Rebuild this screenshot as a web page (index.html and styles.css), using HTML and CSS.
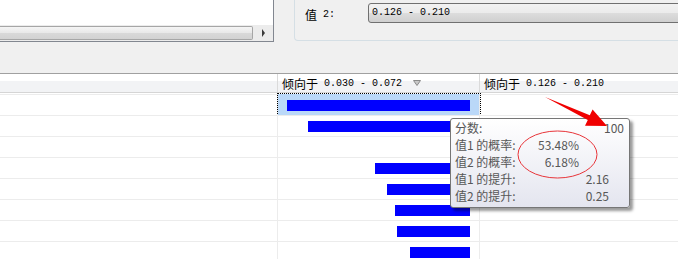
FILE: index.html
```html
<!DOCTYPE html>
<html lang="zh-CN">
<head>
    <meta charset="UTF-8">
    <title>依赖网络 - 属性区分</title>
    <link rel="stylesheet" href="styles.css">
</head>
<body>
    <div class="top">
        <div class="listbox">
            <div class="list-area"></div>
            <div class="hscroll">
                <div class="thumb"></div>
                <div class="arrow-btn"><span class="arrow-right"></span></div>
            </div>
        </div>
        <div class="group">
            <span class="field-label"><span class="cjk">值</span><span class="num">2:</span></span>
            <div class="combo">0.126 - 0.210</div>
        </div>
    </div>

    <div class="grid">
        <div class="grid-head">
            <div class="hcell"></div>
            <div class="hcell">
                <span class="cjk">倾向于</span><span class="num">0.030 - 0.072</span>
                <svg class="sort-icon" width="8" height="6" viewBox="0 0 8 6">
                    <path d="M0.5 0.5 H7.5 L4 5.5 Z" fill="#c8c8c8" stroke="#8a8a8a" stroke-width="1"/>
                </svg>
            </div>
            <div class="hcell"><span class="cjk">倾向于</span><span class="num">0.126 - 0.210</span></div>
        </div>
        <div class="grid-body">
            <!-- 每行: 左列空, 中列倾向值1, 右列倾向值2 -->
            <div class="row">
                <div class="cell"></div>
                <div class="cell selected"><div class="bar" style="width: 183px;"></div></div>
                <div class="cell"></div>
            </div>
            <div class="row">
                <div class="cell"></div>
                <div class="cell"><div class="bar" style="width: 162px;"></div></div>
                <div class="cell"></div>
            </div>
            <div class="row">
                <div class="cell"></div>
                <div class="cell"></div>
                <div class="cell"><div class="bar" style="width: 30px;"></div></div>
            </div>
            <div class="row">
                <div class="cell"></div>
                <div class="cell"><div class="bar" style="width: 95px;"></div></div>
                <div class="cell"></div>
            </div>
            <div class="row">
                <div class="cell"></div>
                <div class="cell"><div class="bar" style="width: 83px;"></div></div>
                <div class="cell"></div>
            </div>
            <div class="row">
                <div class="cell"></div>
                <div class="cell"><div class="bar" style="width: 75px;"></div></div>
                <div class="cell"></div>
            </div>
            <div class="row">
                <div class="cell"></div>
                <div class="cell"><div class="bar" style="width: 73px;"></div></div>
                <div class="cell"></div>
            </div>
            <div class="row">
                <div class="cell"></div>
                <div class="cell"><div class="bar" style="width: 60px;"></div></div>
                <div class="cell"></div>
            </div>
        </div>
    </div>

    <div class="tip">
        <div class="tip-row"><span>分数:</span><span>100</span></div>
        <div class="tip-row"><span>值1 的概率:</span><span class="prob">53.48%</span></div>
        <div class="tip-row"><span>值2 的概率:</span><span class="prob">6.18%</span></div>
        <div class="tip-row"><span>值1 的提升:</span><span class="lift">2.16</span></div>
        <div class="tip-row"><span>值2 的提升:</span><span class="lift">0.25</span></div>
    </div>

    <!-- 红色标注 -->
    <svg class="marks" width="678" height="259" viewBox="0 0 678 259">
        <ellipse cx="557.5" cy="154.5" rx="39.5" ry="23.5" fill="none" stroke="#e8353a" stroke-width="1"/>
        <polygon points="545,97 589.8,115.3 592.6,109.4 607,126 585,125.8 587.8,119.9" fill="#f00000"/>
    </svg>
</body>
</html>
```

FILE: styles.css
```css
body {
    margin: 0;
    width: 678px;
    height: 259px;
    overflow: hidden;
    position: relative;
    background-color: #f0f0f0;
    font-family: "Noto Sans CJK SC", sans-serif;
    font-size: 12px;
    color: #000;
}
.cjk {
    font-family: "Noto Sans CJK SC", sans-serif;
    font-size: 12px;
}
.num {
    font-family: "Liberation Mono", monospace;
    font-size: 10px;
    margin-left: 6px;
    white-space: pre;
}
.top {
    display: flex;
    height: 42px;
}
.listbox {
    width: 274px;
    height: 42px;
    box-sizing: border-box;
    background-color: white;
    border-right: 1px solid #828790;
    border-bottom: 1px solid #828790;
    display: flex;
    flex-direction: column;
}
.list-area {
    flex: 1;
}
.hscroll {
    height: 16px;
    display: flex;
    background-color: #ececec;
}
.thumb {
    width: 253px;
    margin: 1px 0;
    box-sizing: border-box;
    border: 1px solid #a6a6a6;
    border-left: none;
    border-radius: 0 2px 2px 0;
    background: linear-gradient(#f5f5f5, #e8e8e8 50%, #d9d9d9 51%, #d2d2d2);
}
.arrow-btn {
    flex: 1;
    display: flex;
    align-items: center;
    justify-content: center;
}
.arrow-right {
    width: 0;
    height: 0;
    border-left: 3px solid #3a3a3a;
    border-top: 4px solid transparent;
    border-bottom: 4px solid transparent;
}
.group {
    flex: 1;
    margin-left: 20px;
    margin-right: -10px;
    height: 41px;
    box-sizing: border-box;
    border-left: 1px solid #d5dfe5;
    border-bottom: 1px solid #d5dfe5;
    border-radius: 0 0 0 4px;
    padding: 3px 0 0 10px;
    display: flex;
    align-items: flex-start;
}
.field-label {
    width: 63px;
    height: 22px;
    display: flex;
    align-items: center;
}
.combo {
    flex: 1;
    height: 20px;
    box-sizing: border-box;
    border: 1px solid #707070;
    border-radius: 3px;
    background: linear-gradient(#f2f2f2, #ebebeb 50%, #dddddd 50%, #cfcfcf);
    padding-left: 3px;
    font-family: "Liberation Mono", monospace;
    font-size: 10px;
    line-height: 18px;
    white-space: pre;
}
.grid {
    margin-top: 31px;
    background-color: white;
    border-top: 1px solid #a0a0a0;
}
.grid-head {
    display: grid;
    grid-template-columns: 278px 202px 1fr;
    height: 19px;
    box-sizing: border-box;
    border-bottom: 1px solid #d5d5d5;
    background: linear-gradient(#ffffff 0 7px, #f2f3f5 7px);
}
.hcell {
    display: flex;
    align-items: center;
    padding-left: 4px;
    box-sizing: border-box;
    border-right: 1px solid #dadada;
}
.hcell:last-child {
    border-right: none;
}
.sort-icon {
    margin-left: 11px;
}
.grid-body {
    padding-top: 1px;
}
.row {
    display: grid;
    grid-template-columns: 278px 202px 1fr;
    height: 21px;
}
.cell {
    box-sizing: border-box;
    border-top: 1px solid #ececec;
    border-right: 1px solid #ececec;
    display: flex;
    align-items: center;
    justify-content: flex-end;
    padding-right: 9px;
}
.cell:last-child {
    border-right: none;
    justify-content: flex-start;
    padding: 0 0 0 8px;
}
.cell.selected {
    background-color: #bad8f8;
    border-top-color: #bad8f8;
    outline: 1px dotted #000;
}
.bar {
    height: 11px;
    background-color: #0000ff;
}
.tip {
    position: absolute;
    left: 450px;
    top: 118px;
    width: 180px;
    height: 90px;
    box-sizing: border-box;
    border: 1px solid #767676;
    border-radius: 3px;
    background: linear-gradient(#ffffff, #e4e5ef);
    box-shadow: 3px 3px 3px rgba(0,0,0,0.4);
    padding: 0 5px 0 4px;
    color: #575757;
    line-height: 17px;
}
.tip-row {
    display: flex;
    justify-content: space-between;
}
.tip-row .prob {
    margin-right: 45px;
}
.tip-row .lift {
    margin-right: 15px;
}
.marks {
    position: absolute;
    left: 0;
    top: 0;
    pointer-events: none;
}
```
